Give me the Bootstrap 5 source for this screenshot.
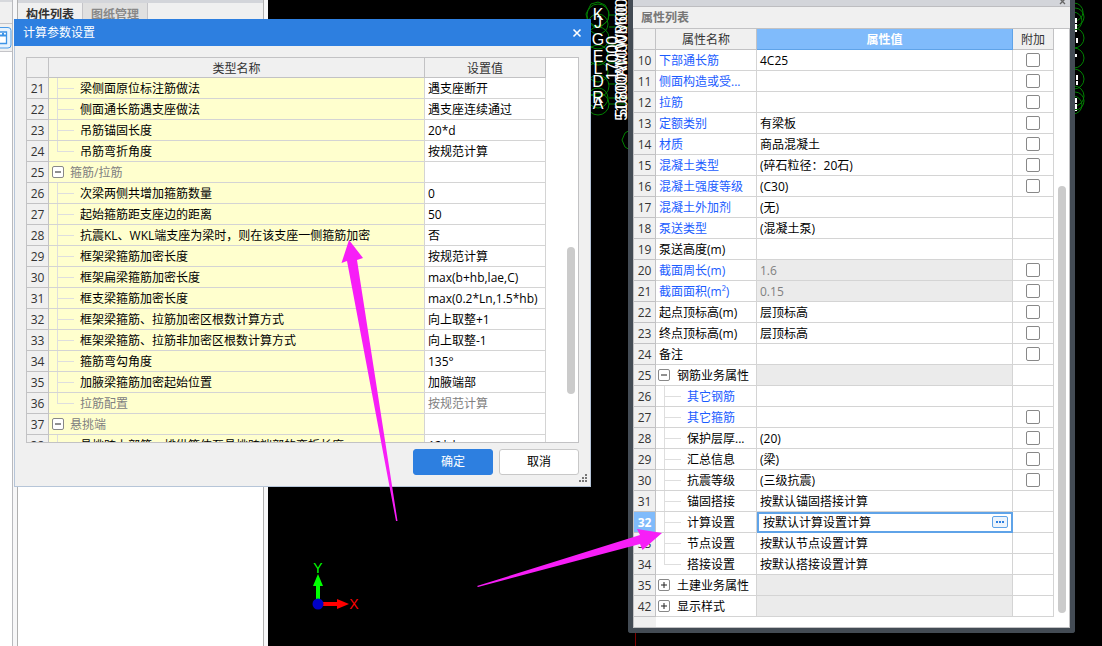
<!DOCTYPE html>
<html lang="zh-CN">
<head>
<meta charset="utf-8">
<meta name="viewport" content="width=device-width, initial-scale=1">
<title>计算参数设置</title>
<link href="https://cdn.jsdelivr.net/npm/bootstrap@5.3.0/dist/css/bootstrap.min.css" rel="stylesheet">
<style>
body{font-family:"Open Sans","Noto Sans CJK SC",sans-serif;font-size:12px;line-height:20px;color:#000;background:#000}
.desk{min-height:100vh}
.layer{position:absolute;inset:0}
.edge{width:13px;background:#fff;border-right:1px solid #b9babe}
.edge-top{height:52px;background:#f0f0f0;border-top:2px solid #d6d8dc;border-bottom:1px solid #c4c4c8;padding-top:21px}
.edge-top svg{display:block;border-top:1px solid #c4c4c8;padding-top:2px;height:28px}
.gutter{width:4px;background:#f7f7f8}
.dock{width:247px;background:#fff;border:solid #b0b0b0;border-width:0 1px}
.dock-tabs{height:52px;background:#f0f0f0;border-top:3px solid #d3d5da}
.dock-tabs button{border:0;border-right:1px solid #c4c4c8;background:#e0e0e0;color:#888;font-size:12px;line-height:20px;padding:0 8px;height:24px;font-weight:600}
.dock-tabs button.on{background:#f0f0f0;color:#333;font-weight:700}
.windows{padding:0 27px 0 14px;gap:37px}
.dlg{flex:577 1 577px;min-width:0;margin-top:19px;background:#f0f0f0;border:1px solid #b6c5d8}
.dlg-title{background:#2d7fe0;color:#fff;height:27px;margin:-1px -1px 0;padding:0 9px}
.dlg-title button,.prop-strip button{border:0;background:none;padding:0;line-height:0}
.dlg-body{padding:11px}
.list-box{height:386px;overflow:hidden;background:#fff;border:1px solid #c2c2c4;position:relative;padding-right:32px}
.sheet{width:100%;table-layout:fixed;border-collapse:separate;border-spacing:0}
.sheet th,.sheet td{height:21px;line-height:18px;padding:2px 3px 0;border:solid #d4d4d4;border-width:0 1px 1px 0;white-space:nowrap;overflow:hidden;font-weight:400;position:relative}
.sheet thead th{text-align:center;background:#f0f0f0;border-color:#c2c2c4;color:#333}
.params thead th{height:20px;line-height:17px}
.sheet tbody th{background:#f0f0f0;border-color:#c2c2c4;text-align:center;color:#333;padding:2px 0 0}
.sheet .num{width:22px}
.params .val{width:121px}
.params td:nth-child(2){background:#ffffce}
.sheet td.kid{padding-left:31px}
.sheet td.grp{padding-left:21px}
.sheet td.muted{color:#808080}
.kid::before{content:"";position:absolute;left:8px;top:0;bottom:-1px;border-left:1px solid #dedede}
.kid::after{content:"";position:absolute;left:8px;top:10px;width:17px;border-top:1px solid #dedede}
.kid.last::before{bottom:10px}
.fold{position:absolute;left:3px;top:4px;width:12px;height:12px;padding:0;border:1px solid #888;border-radius:2px;background:#fff;line-height:0}
.fold svg{display:block}
.thumb{position:absolute;right:3px;width:8px;border-radius:4px;background:#cbcbcb}
.params-thumb{top:189px;height:147px}
.prop-thumb{top:157px;bottom:14px}
.act{width:80px;height:26px;font-size:12px;line-height:18px;padding:3px;border-radius:3px}
.act-ok{--bs-btn-bg:#2d7fe0;--bs-btn-border-color:#2d7fe0}
.act-no{--bs-btn-bg:#fff;--bs-btn-border-color:#c8c8c8;--bs-btn-color:#000}
.grip{position:absolute;right:2px;bottom:3px}
.prop{flex:447 1 447px;min-width:0;background:#fff;border:5px solid #434b54;border-top:0;border-radius:0 0 3px 3px;margin-bottom:13px}
.prop-strip{height:7px;background:#d3d5da;border-bottom:1px solid #bdbdc0;padding-right:4px}
.prop-title{height:22px;line-height:22px;background:#f0f0f0;border-bottom:1px solid #c2c2c4;color:#777;font-weight:600;padding:0 8px}
.prop-box{position:relative;padding-right:15px;border:1px solid #c2c2c4;border-top:0;background:linear-gradient(90deg,#f0f0f0 22px,#fff 22px)}
.prop-box .name{width:101px}
.prop-box .add{width:41px}
.prop-box .sheet thead .picked{background:#80bbfb;color:#fff;font-weight:700;border-color:#5fa3e8}
.prop-box .sheet tbody td{background:#fff}
.prop-box .sheet tbody td.off{background:#ebebeb;color:#808080}
.prop-box .sheet td.blue{color:#1a5cff}
.prop-box .fold{left:2px}
.prop-box .sheet tbody th.cur{background:#80bbfb;color:#fff;font-weight:700}
.prop-box .form-check-input{width:14px;height:14px;margin:0;border:1px solid #888;border-radius:2px;vertical-align:middle;position:relative;top:-2px}
.sheet td.cell-edit{padding:0;overflow:visible}
.editor{height:21px;margin:-1px -1px -1px 0;border:2px solid #5fa3e8;position:relative;z-index:1;background:#fff}
.editor input{border:0;outline:0;padding:0 4px;height:17px;line-height:17px;font-size:12px;min-width:0}
.editor button{width:16px;height:12px;padding:0;margin:2px 3px 0 0;border:1px solid #5fa3e8;border-radius:2px;background:#edf4fc;line-height:0}
.tail{height:10px}
</style>
</head>
<body>
<main class="desk position-relative overflow-hidden">
  <div class="layer d-flex">
    <div class="edge overflow-hidden flex-shrink-0">
      <div class="edge-top">
        <svg width="12" height="28" viewBox="0 0 12 25"><path d="M0 1.500H8a3 3 0 0 1 3 3V19a3 3 0 0 1-3 3H0" fill="#e6f2fd" stroke="#4a9be8"/><path d="M0 6H6.500V17.500H0" fill="#fff" stroke="#3c93e6" stroke-width="1.300"/><path d="M0 9.500H6.500M2 8h2" stroke="#3c93e6" stroke-width="2"/></svg>
      </div>
    </div>
    <div class="gutter flex-shrink-0"></div>
    <section class="dock flex-shrink-0">
      <div class="dock-tabs d-flex align-items-start"><button class="on" type="button">构件列表</button><button type="button">图纸管理</button></div>
    </section>
    <div class="gutter flex-shrink-0"></div>
  </div>

  <svg class="layer w-100 h-100" viewBox="0 0 1102 646" preserveAspectRatio="xMinYMin slice" aria-hidden="true">
    <g fill="none" stroke="#008000">
      <path d="M591 4l7-2 7 3 4 7-1 8-6 6-8 1-6-5-2-8z"/>
      <circle cx="598" cy="15" r="11"/><circle cx="598" cy="24" r="10"/><circle cx="598" cy="38" r="11"/><circle cx="598" cy="55" r="10"/><circle cx="598" cy="72" r="10"/><circle cx="598" cy="86" r="11"/><circle cx="598" cy="98" r="10"/><circle cx="598" cy="104" r="11"/>
      <path d="M609 15h19M609 27h19M608 45h20M608 63h20M609 84h19M609 98h19M609 104h19M630 130l-5 3-3 7 3 7 5 3"/>
      <circle cx="1074" cy="12" r="9"/><circle cx="1075" cy="17" r="9"/><circle cx="1073" cy="21" r="9"/><circle cx="1074" cy="38" r="10"/><circle cx="1074" cy="58" r="10"/><circle cx="1074" cy="79" r="10"/><circle cx="1074" cy="96" r="10"/><circle cx="1075" cy="101" r="9"/><circle cx="1073" cy="105" r="9"/>
    </g>
    <path d="M1076 18v14M1077 38v6M1076 54v3M1077 75v10M1076 98v13" stroke="#fff" stroke-width="2" stroke-dasharray="5 1"/>
    <g fill="#fff" font-family="Liberation Sans, sans-serif" font-size="16" text-anchor="middle">
      <text x="598" y="20">K</text><text x="598" y="28">J</text><text x="598" y="45">G</text><text x="598" y="62">E</text><text x="598" y="74">L</text><text x="598" y="87">D</text><text x="598" y="103">R</text><text x="598" y="109">A</text>
      <text transform="translate(618 58) rotate(-90)">17000</text>
      <text transform="translate(627 58) rotate(-90)">50800W0W8600</text>
      <text transform="translate(627 62) rotate(-90)">51600AM00M00</text>
    </g>
    <path d="M622 30v80M626 14v96" stroke="#b00020" stroke-dasharray="1 9"/>
    <path d="M635.500 632v14" stroke="#800000"/>
    <path d="M318 604V584" stroke="#0f0" stroke-width="4"/><path d="M318 574l5 12h-10z" fill="#0f0"/>
    <path d="M318 604H338" stroke="red" stroke-width="4"/><path d="M349 604l-12-5v10z" fill="red"/>
    <circle cx="318" cy="604" r="5.500" fill="#0000c8"/>
    <g font-family="Liberation Sans, sans-serif" font-size="14" text-anchor="middle"><text x="318" y="573" fill="#0f0">Y</text><text x="354" y="609" fill="red">X</text></g>
  </svg>

  <div class="windows position-relative d-flex align-items-start">
    <section class="dlg position-relative">
      <header class="dlg-title d-flex align-items-center justify-content-between"><span>计算参数设置</span>
        <button type="button" aria-label="关闭"><svg width="10" height="10" viewBox="0 0 10 10"><path d="M1.500 1.500l7 7M8.500 1.500l-7 7" stroke="#fff" stroke-width="1.600"/></svg></button></header>
      <div class="dlg-body">
        <div class="list-box">
          <table class="sheet params">
            <thead><tr><th class="num"></th><th>类型名称</th><th class="val">设置值</th></tr></thead>
            <tbody>
              <tr><th>21</th><td class="kid">梁侧面原位标注筋做法</td><td>遇支座断开</td></tr>
              <tr><th>22</th><td class="kid">侧面通长筋遇支座做法</td><td>遇支座连续通过</td></tr>
              <tr><th>23</th><td class="kid">吊筋锚固长度</td><td>20*d</td></tr>
              <tr><th>24</th><td class="kid last">吊筋弯折角度</td><td>按规范计算</td></tr>
              <tr><th>25</th><td class="grp muted"><button class="fold" type="button" aria-label="折叠"><svg width="10" height="10"><path d="M2 5h6" stroke="#222"/></svg></button>箍筋/拉筋</td><td></td></tr>
              <tr><th>26</th><td class="kid">次梁两侧共增加箍筋数量</td><td>0</td></tr>
              <tr><th>27</th><td class="kid">起始箍筋距支座边的距离</td><td>50</td></tr>
              <tr><th>28</th><td class="kid">抗震KL、WKL端支座为梁时，则在该支座一侧箍筋加密</td><td>否</td></tr>
              <tr><th>29</th><td class="kid">框架梁箍筋加密长度</td><td>按规范计算</td></tr>
              <tr><th>30</th><td class="kid">框架扁梁箍筋加密长度</td><td>max(b+hb,lae,C)</td></tr>
              <tr><th>31</th><td class="kid">框支梁箍筋加密长度</td><td>max(0.2*Ln,1.5*hb)</td></tr>
              <tr><th>32</th><td class="kid">框架梁箍筋、拉筋加密区根数计算方式</td><td>向上取整+1</td></tr>
              <tr><th>33</th><td class="kid">框架梁箍筋、拉筋非加密区根数计算方式</td><td>向上取整-1</td></tr>
              <tr><th>34</th><td class="kid">箍筋弯勾角度</td><td>135°</td></tr>
              <tr><th>35</th><td class="kid">加腋梁箍筋加密起始位置</td><td>加腋端部</td></tr>
              <tr><th>36</th><td class="kid last muted">拉筋配置</td><td class="muted">按规范计算</td></tr>
              <tr><th>37</th><td class="grp muted"><button class="fold" type="button" aria-label="折叠"><svg width="10" height="10"><path d="M2 5h6" stroke="#222"/></svg></button>悬挑端</td><td></td></tr>
              <tr><th>38</th><td class="kid">悬挑跨上部第一排纵筋伸至悬挑跨端部的弯折长度</td><td>12*d</td></tr>
            </tbody>
          </table>
          <div class="thumb params-thumb"></div>
        </div>
        <div class="d-flex justify-content-end" style="gap:6px;padding-top:6px">
          <button class="btn btn-primary act act-ok" type="button">确定</button>
          <button class="btn act act-no" type="button">取消</button>
        </div>
      </div>
      <svg class="grip" width="9" height="9" fill="#777"><path d="M6 0h2v2H6zM3 3h2v2H3zM6 3h2v2H6zM0 6h2v2H0zM3 6h2v2H3zM6 6h2v2H6z"/></svg>
    </section>

    <section class="prop">
      <div class="prop-strip d-flex justify-content-end align-items-start overflow-hidden"><button type="button" aria-label="关闭"><svg width="7" height="7" viewBox="0 0 7 7"><path d="M1-1l5 5M6-1l-5 5" stroke="#666" stroke-width="1.300"/></svg></button></div>
      <div class="prop-title">属性列表</div>
      <div class="prop-box">
        <table class="sheet">
          <thead><tr><th class="num"></th><th class="name">属性名称</th><th class="picked">属性值</th><th class="add">附加</th></tr></thead>
          <tbody>
            <tr><th>10</th><td class="blue">下部通长筋</td><td>4C25</td><td class="text-center"><input class="form-check-input" type="checkbox" aria-label="附加 下部通长筋"></td></tr>
            <tr><th>11</th><td class="blue">侧面构造或受...</td><td></td><td class="text-center"><input class="form-check-input" type="checkbox" aria-label="附加 侧面构造"></td></tr>
            <tr><th>12</th><td class="blue">拉筋</td><td></td><td class="text-center"><input class="form-check-input" type="checkbox" aria-label="附加 拉筋"></td></tr>
            <tr><th>13</th><td class="blue">定额类别</td><td>有梁板</td><td class="text-center"><input class="form-check-input" type="checkbox" aria-label="附加 定额类别"></td></tr>
            <tr><th>14</th><td class="blue">材质</td><td>商品混凝土</td><td class="text-center"><input class="form-check-input" type="checkbox" aria-label="附加 材质"></td></tr>
            <tr><th>15</th><td class="blue">混凝土类型</td><td>(碎石粒径：20石)</td><td class="text-center"><input class="form-check-input" type="checkbox" aria-label="附加 混凝土类型"></td></tr>
            <tr><th>16</th><td class="blue">混凝土强度等级</td><td>(C30)</td><td class="text-center"><input class="form-check-input" type="checkbox" aria-label="附加 混凝土强度等级"></td></tr>
            <tr><th>17</th><td class="blue">混凝土外加剂</td><td>(无)</td><td></td></tr>
            <tr><th>18</th><td class="blue">泵送类型</td><td>(混凝土泵)</td><td></td></tr>
            <tr><th>19</th><td>泵送高度(m)</td><td></td><td></td></tr>
            <tr><th>20</th><td class="blue">截面周长(m)</td><td class="off">1.6</td><td class="text-center"><input class="form-check-input" type="checkbox" aria-label="附加 截面周长"></td></tr>
            <tr><th>21</th><td class="blue">截面面积(m²)</td><td class="off">0.15</td><td class="text-center"><input class="form-check-input" type="checkbox" aria-label="附加 截面面积"></td></tr>
            <tr><th>22</th><td>起点顶标高(m)</td><td>层顶标高</td><td class="text-center"><input class="form-check-input" type="checkbox" aria-label="附加 起点顶标高"></td></tr>
            <tr><th>23</th><td>终点顶标高(m)</td><td>层顶标高</td><td class="text-center"><input class="form-check-input" type="checkbox" aria-label="附加 终点顶标高"></td></tr>
            <tr><th>24</th><td>备注</td><td></td><td class="text-center"><input class="form-check-input" type="checkbox" aria-label="附加 备注"></td></tr>
            <tr><th>25</th><td class="grp"><button class="fold" type="button" aria-label="折叠"><svg width="10" height="10"><path d="M2 5h6" stroke="#222"/></svg></button>钢筋业务属性</td><td class="off"></td><td></td></tr>
            <tr><th>26</th><td class="kid blue">其它钢筋</td><td></td><td></td></tr>
            <tr><th>27</th><td class="kid blue">其它箍筋</td><td></td><td class="text-center"><input class="form-check-input" type="checkbox" aria-label="附加 其它箍筋"></td></tr>
            <tr><th>28</th><td class="kid">保护层厚...</td><td>(20)</td><td class="text-center"><input class="form-check-input" type="checkbox" aria-label="附加 保护层厚度"></td></tr>
            <tr><th>29</th><td class="kid">汇总信息</td><td>(梁)</td><td class="text-center"><input class="form-check-input" type="checkbox" aria-label="附加 汇总信息"></td></tr>
            <tr><th>30</th><td class="kid">抗震等级</td><td>(三级抗震)</td><td class="text-center"><input class="form-check-input" type="checkbox" aria-label="附加 抗震等级"></td></tr>
            <tr><th>31</th><td class="kid">锚固搭接</td><td>按默认锚固搭接计算</td><td></td></tr>
            <tr><th class="cur">32</th><td class="kid">计算设置</td><td class="cell-edit"><div class="editor d-flex"><input class="flex-grow-1" type="text" value="按默认计算设置计算" aria-label="计算设置"><button type="button" aria-label="更多"><svg width="14" height="10"><path d="M3 5h2M6 5h2M9 5h2" stroke="#2d7fe0" stroke-width="2"/></svg></button></div></td><td></td></tr>
            <tr><th>33</th><td class="kid">节点设置</td><td>按默认节点设置计算</td><td></td></tr>
            <tr><th>34</th><td class="kid last">搭接设置</td><td>按默认搭接设置计算</td><td></td></tr>
            <tr><th>35</th><td class="grp"><button class="fold" type="button" aria-label="展开"><svg width="10" height="10"><path d="M2 5h6M5 2v6" stroke="#222"/></svg></button>土建业务属性</td><td class="off"></td><td></td></tr>
            <tr><th>42</th><td class="grp"><button class="fold" type="button" aria-label="展开"><svg width="10" height="10"><path d="M2 5h6M5 2v6" stroke="#222"/></svg></button>显示样式</td><td class="off"></td><td></td></tr>
          </tbody>
        </table>
        <div class="tail"></div>
        <div class="thumb prop-thumb"></div>
      </div>
    </section>
  </div>

  <svg class="layer w-100 h-100 pe-none" viewBox="0 0 1102 646" preserveAspectRatio="none" fill="#f71ef7" aria-hidden="true">
    <path d="M349 240L363 258L357 260L397.500 521H396L347 261L341.500 263Z"/>
    <path d="M662 533L637 529L640 535L477 586L478 587L640 544L642.500 550Z"/>
  </svg>
</main>
<script src="https://cdn.jsdelivr.net/npm/bootstrap@5.3.0/dist/js/bootstrap.bundle.min.js"></script>
</body>
</html>
